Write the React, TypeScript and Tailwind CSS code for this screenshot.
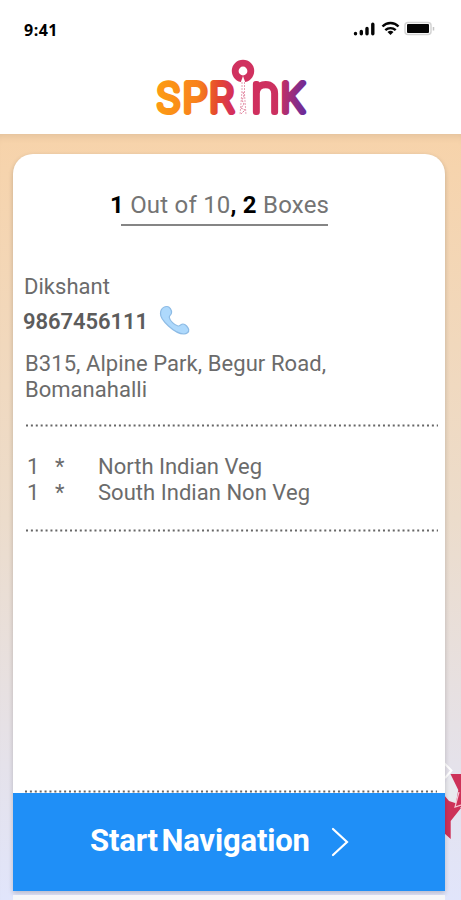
import type { ReactNode } from 'react';

interface OrderItem {
  id: number;
  quantity: number;
  name: string;
}

const items: OrderItem[] = [
  { id: 1, quantity: 1, name: 'North Indian Veg' },
  { id: 2, quantity: 1, name: 'South Indian Non Veg' },
];

function StatusBar() {
  return (
    <div className="flex h-[56px] items-center justify-between pt-[3px] pl-[24px] pr-[25px]">
      <span className="font-['Open_Sans',sans-serif] text-[16px] leading-5 font-bold tracking-[0.5px] text-black">9:41</span>
      <svg width="84" height="16" viewBox="0 0 84 16" className="-mt-[1px]">
        <g stroke="#050505" strokeWidth="3.400" strokeLinecap="round">
          <path d="M3.5 12.5v.3M9.300 10.500V12.800M15 7.500v5.300M20.800 3.200v9.600" />
        </g>
        <g fill="none" stroke="#050505" strokeWidth="2.400">
          <path d="M30.500 5.500a11 11 0 0 1 16 0" />
          <path d="M33.300 9.200a7.500 7.500 0 0 1 10.400 0" />
        </g>
        <path d="M38.500 14l-3-3a4.500 4.500 0 0 1 6 0z" fill="#050505" />
        <rect x="53" y="1.500" width="26" height="12" rx="3" fill="#fff" stroke="#d4d4d4" strokeWidth="1.500" />
        <rect x="55" y="3" width="22" height="9" rx="1" fill="#050505" />
        <path d="M81.500 6v3.500" stroke="#c5c5c5" strokeWidth="1.500" />
      </svg>
    </div>
  );
}

function Logo() {
  return (
    <svg width="160" height="66" viewBox="0 0 160 66" className="overflow-visible" role="img" aria-label="Sprink">
      <defs>
        <linearGradient id="brand" gradientUnits="userSpaceOnUse" x1="6" y1="20" x2="156" y2="32">
          <stop offset="0" stopColor="#fd9d13" />
          <stop offset="0.28" stopColor="#f8821d" />
          <stop offset="0.42" stopColor="#e5492e" />
          <stop offset="0.52" stopColor="#d42f5c" />
          <stop offset="0.82" stopColor="#cb3060" />
          <stop offset="1" stopColor="#6d2b98" />
        </linearGradient>
      </defs>
      <g
        fill="url(#brand)"
        stroke="url(#brand)"
        strokeWidth="6"
        strokeLinejoin="round"
        strokeLinecap="round"
        className="font-['Inter',sans-serif] text-[39px] font-thin"
      >
        <text x="6.500" y="56" textLength="24" lengthAdjust="spacingAndGlyphs">S</text>
        <text x="32.500" y="56" textLength="25" lengthAdjust="spacingAndGlyphs">P</text>
        <text x="59" y="56" textLength="25" lengthAdjust="spacingAndGlyphs">R</text>
        <text x="101" y="56" textLength="29" lengthAdjust="spacingAndGlyphs" className="text-[51px]">n</text>
        <text x="130.500" y="56" textLength="24" lengthAdjust="spacingAndGlyphs">K</text>
      </g>
      <circle cx="93" cy="15" r="7.800" fill="none" stroke="#d0315f" strokeWidth="6.800" />
      <path d="M93 20l-2.500 7h5z" fill="#fff" />
      <path d="M92 26v9l-2 24M94.500 26v12l1.500 21" fill="none" stroke="#e8a0b4" strokeWidth="1" strokeDasharray="2 1" />
      <path d="M93 36l1 4-2 4 2 4-3 4 4 2-4 4" fill="none" stroke="#df7895" strokeWidth="1" strokeDasharray="2 1" />
    </svg>
  );
}

function PhoneIcon() {
  return (
    <svg width="32" height="32" viewBox="0 0 32 32">
      <path
        d="M2.200 5C3.200 3 5.500 1.500 8 1.500c2.500 0 5 3.500 4.500 6.500-.4 2.200-2.500 2.500-2.200 4.500.5 3 5.200 8 8.700 8.500 2.300.3 2.700-2 5-2 2.500 0 5.200 3.500 5.700 5.500.5 2.500-2.200 4.500-4.700 4.500C15.500 29 1 14.500 1.500 8.500c.1-1.400.2-2.400.7-3.500z"
        fill="#aed9fc"
        stroke="#8dbbe5"
        strokeWidth="1.200"
      />
    </svg>
  );
}

function DottedLine() {
  return (
    <svg width="414" height="3" className="block">
      <path d="M1 1.500H413" stroke="#666" strokeWidth="2" strokeDasharray="2 2.890" />
    </svg>
  );
}

function Line({ width, children }: { width: number; children: ReactNode }) {
  return (
    <svg width={width + 4} height="26" className="block overflow-visible">
      <text x="0" y="20" textLength={width} fill="currentColor">
        {children}
      </text>
    </svg>
  );
}

export default function App() {
  return (
    <div className="flex h-[900px] w-[461px] flex-col overflow-hidden bg-white font-['Roboto',sans-serif] text-[22px] text-[#6b6b6b]">
      <header className="h-[134px] shrink-0 bg-white">
        <StatusBar />
        <div className="flex justify-center pr-[1px]">
          <Logo />
        </div>
      </header>

      <main className="relative h-[766px] bg-linear-to-b from-[#f7d3aa] via-[#ecdccb] via-50% to-[#e1e5fb] px-[13px] pt-[20px] shadow-[inset_0_8px_10px_-7px_#0000001c]">
        <svg width="20" height="84" viewBox="0 0 20 84" className="absolute top-[624px] right-0">
          <path d="M3 5l7.500 7.500L4 20" fill="none" stroke="#fff" strokeWidth="2" />
          <path d="M4 34v-8l5-10 8 16-3 14-6-3z" fill="#e9e9ee" />
          <path d="M9.500 16H20v33l-6 1 3.300-18z" fill="#cd3158" />
          <path d="M3 37l5 6 6 2 6 5-10.300 13v18L3 75z" fill="#cd3158" />
          <path d="M18 34l-4 15 6-2" fill="none" stroke="#f5c7d3" strokeWidth="1.200" />
        </svg>

        <div className="relative flex h-[737px] w-[432px] flex-col rounded-t-[20px] bg-white shadow-[0_2px_5px_#0003]">
          <div className="ml-[97px] pt-[39px]">
            <div className="text-[24px] text-[#747474]">
              <Line width={219}>
                <tspan className="font-bold" fill="#000">1</tspan> Out of 10
                <tspan className="font-bold" fill="#000">, 2</tspan> Boxes
              </Line>
            </div>
            <div className="mt-[5px] ml-[11px] h-[2px] w-[207px] bg-[#858585]" />
          </div>

          <div className="mt-[48px] pl-[11px]">
            <Line width={86}>Dikshant</Line>
            <div className="mt-[5px] -ml-[1px] flex h-[32px] items-center font-semibold text-[#5c5c5c]">
              <div className="pt-[2px]">
                <Line width={125}>9867456111</Line>
              </div>
              <div className="ml-[7px]">
                <PhoneIcon />
              </div>
            </div>
            <div className="mt-[14px] ml-[1px]">
              <Line width={301}>B315, Alpine Park, Begur Road,</Line>
              <Line width={122}>Bomanahalli</Line>
            </div>
          </div>

          <div className="mt-[21px] ml-[12px]">
            <DottedLine />
          </div>

          <ul className="mt-[27px] ml-[14px]">
            {items.map((item) => (
              <li key={item.id} className="flex">
                <span className="w-[28px] leading-[26px]">{item.quantity}</span>
                <span className="w-[43px] leading-[26px]">*</span>
                <Line width={item.id === 1 ? 164 : 212}>{item.name}</Line>
              </li>
            ))}
          </ul>

          <div className="mt-[23px] ml-[12px]">
            <DottedLine />
          </div>

          <div className="mt-auto ml-[11px]">
            <DottedLine />
          </div>
          <button className="flex h-[98px] w-full shrink-0 items-center bg-[#1f8ff7] pl-[77px] text-[31px] font-bold text-white">
            <div className="pt-[4px] [word-spacing:-4px]">
              <Line width={220}>Start Navigation</Line>
            </div>
            <svg width="18" height="30" viewBox="0 0 18 30" className="ml-[17px]">
              <path d="M2 2l14 13L2 28" fill="none" stroke="currentColor" strokeWidth="2.200" strokeLinecap="round" />
            </svg>
          </button>
        </div>
        <div className="relative mt-[4px] h-[5px] w-[432px] bg-[#f6f6f8]" />
      </main>
    </div>
  );
}
